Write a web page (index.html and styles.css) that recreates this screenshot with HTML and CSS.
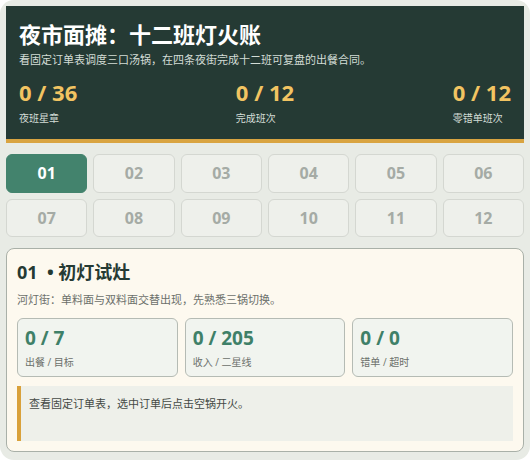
FILE: index.html
```html
<!DOCTYPE html>
<html lang="zh-CN">
<head>
<meta charset="utf-8">
<title>夜市面摊：十二班灯火账</title>
<link rel="stylesheet" href="styles.css">
</head>
<body>
<div class="app">
  <header class="hero">
    <h1 class="hero-title">夜市面摊：十二班灯火账</h1>
    <p class="hero-sub">看固定订单表调度三口汤锅，在四条夜街完成十二班可复盘的出餐合同。</p>
    <div class="hero-stats">
      <div class="hero-stat"><div class="hero-num">0 / 36</div><div class="hero-label">夜班星章</div></div>
      <div class="hero-stat"><div class="hero-num">0 / 12</div><div class="hero-label">完成班次</div></div>
      <div class="hero-stat"><div class="hero-num">0 / 12</div><div class="hero-label">零错单班次</div></div>
    </div>
  </header>

  <nav class="shifts">
    <button class="shift is-active">01</button>
    <button class="shift">02</button>
    <button class="shift">03</button>
    <button class="shift">04</button>
    <button class="shift">05</button>
    <button class="shift">06</button>
    <button class="shift">07</button>
    <button class="shift">08</button>
    <button class="shift">09</button>
    <button class="shift">10</button>
    <button class="shift">11</button>
    <button class="shift">12</button>
  </nav>

  <section class="card">
    <h2 class="card-title">01 <span class="sep">•</span>初灯试灶</h2>
    <p class="card-desc">河灯街：单料面与双料面交替出现，先熟悉三锅切换。</p>
    <div class="metrics">
      <div class="metric"><div class="metric-num">0 / 7</div><div class="metric-label">出餐 / 目标</div></div>
      <div class="metric"><div class="metric-num">0 / 205</div><div class="metric-label">收入 / 二星线</div></div>
      <div class="metric"><div class="metric-num">0 / 0</div><div class="metric-label">错单 / 超时</div></div>
    </div>
    <div class="note">查看固定订单表，选中订单后点击空锅开火。</div>
  </section>
</div>
</body>
</html>
```

FILE: styles.css
```css
* {
  box-sizing: border-box;
}

html,
body {
  margin: 0;
  padding: 0;
  background: #ffffff;
}

body {
  font-family: "Open Sans", "Noto Sans CJK SC", sans-serif;
  color: #253a33;
}

.app {
  width: 530px;
  height: 460px;
  background: #e8ebe5;
  border-radius: 14px;
  padding: 6px;
  display: flex;
  flex-direction: column;
  gap: 11px;
  overflow: hidden;
}

/* dark banner */
.hero {
  background: #253a34;
  border-bottom: 4px solid #d9a441;
  padding: 14px 13px 14px;
}

.hero-title {
  margin: 0;
  font-size: 22px;
  line-height: 29px;
  font-weight: 700;
  color: #ffffff;
}

.hero-sub {
  margin: 3px 0 0;
  font-size: 11px;
  line-height: 16px;
  color: #d3ddd6;
}

.hero-stats {
  display: flex;
  justify-content: space-between;
  margin-top: 10.5px;
}

.hero-num {
  font-size: 22px;
  line-height: 26px;
  font-weight: 700;
  color: #f2c462;
}

.hero-label {
  margin-top: 6.5px;
  font-size: 10px;
  line-height: 14px;
  color: #d3ddd6;
}

/* shift picker */
.shifts {
  display: grid;
  grid-template-columns: repeat(6, 1fr);
  gap: 6px;
}

.shift {
  height: 38.5px;
  margin: 0;
  padding: 0;
  border: 1px solid #d4d7d1;
  border-radius: 6px;
  background: #eef0eb;
  color: #a5aba5;
  font-family: "Open Sans", sans-serif;
  font-size: 16px;
  font-weight: 700;
}

.shift.is-active {
  background: #43836d;
  border-color: #43836d;
  color: #ffffff;
}

/* level card */
.card {
  flex: 0 0 auto;
  background: #fdf9ef;
  border: 1px solid #a9b0a8;
  border-radius: 8px;
  padding: 11px 10px 10px;
}

.card-title {
  margin: 0;
  font-size: 18px;
  line-height: 24px;
  font-weight: 700;
  color: #253a33;
}

.card-title .sep {
  display: inline-block;
  width: 16px;
  text-align: center;
}

.card-desc {
  margin: 8px 0 0;
  font-size: 11px;
  line-height: 16px;
  color: #6c706b;
}

.metrics {
  display: grid;
  grid-template-columns: repeat(3, 1fr);
  gap: 7px;
  margin-top: 10px;
}

.metric {
  background: #f1f4ef;
  border: 1px solid #b5bbb4;
  border-radius: 6px;
  padding: 6px 7px 7px;
}

.metric-num {
  font-size: 19px;
  line-height: 26px;
  font-weight: 700;
  color: #3f8068;
}

.metric-label {
  margin-top: 4px;
  font-size: 10px;
  line-height: 14px;
  color: #6c706b;
}

.note {
  margin-top: 9px;
  height: 55px;
  background: #eef0ea;
  border-left: 4px solid #d9a13b;
  padding: 10px 8px;
  font-size: 11px;
  line-height: 16px;
  color: #454a46;
}
```
